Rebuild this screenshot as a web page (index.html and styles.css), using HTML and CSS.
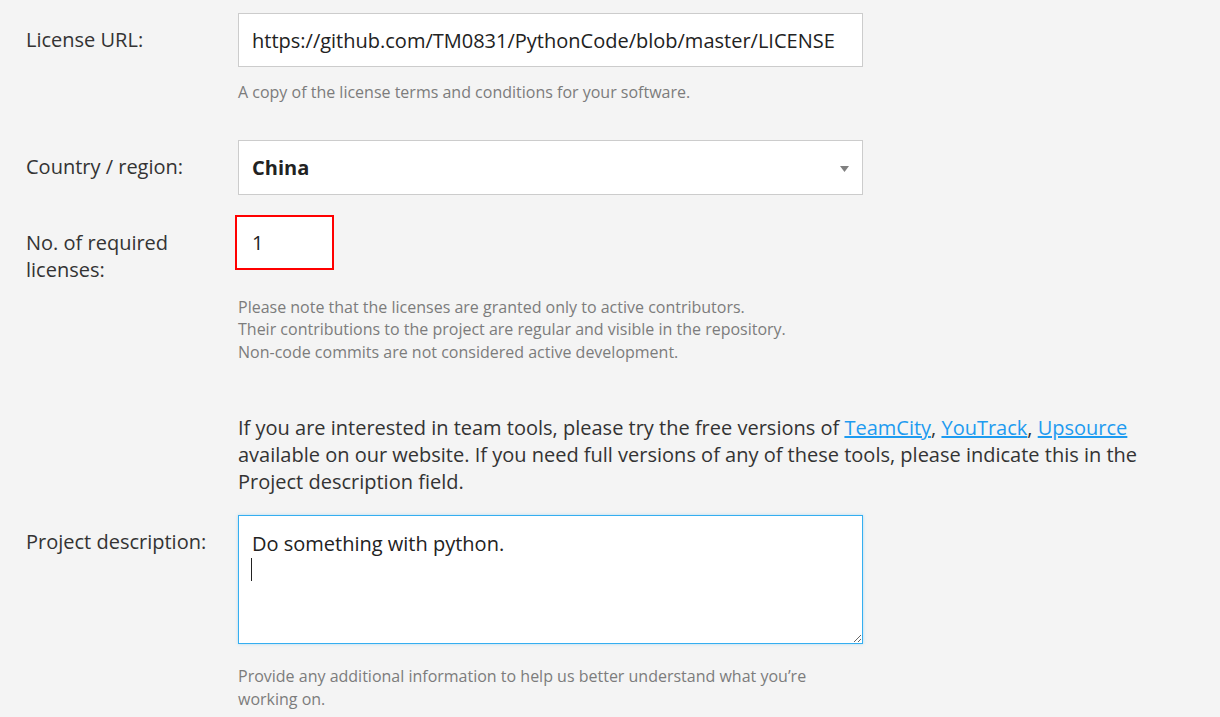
FILE: index.html
```html
<!DOCTYPE html>
<html>
<head>
    <title>License Application</title>
    <link rel="stylesheet" href="styles.css">
</head>
<body>
    <div class="form">
        <div class="row row-url">
            <label class="row-label" for="licenseUrl">License URL:</label>
            <div class="field">
                <input class="input" id="licenseUrl" type="text" value="https://github.com/TM0831/PythonCode/blob/master/LICENSE">
                <div class="hint">A copy of the license terms and conditions for your software.</div>
            </div>
        </div>
        <div class="row row-country">
            <label class="row-label">Country / region:</label>
            <div class="field">
                <div class="select">
                    <span class="select-value">China</span>
                    <svg class="select-arrow" width="9" height="6" viewBox="0 0 9 6"><path d="M0 0h9L4.5 6z" fill="#808080"/></svg>
                </div>
            </div>
        </div>
        <div class="row row-count">
            <label class="row-label row-label-count" for="licenseCount">No. of required licenses:</label>
            <div class="field">
                <input class="input input-number input-error" id="licenseCount" type="text" value="1">
                <div class="hint hint-count">
                    Please note that the licenses are granted only to active contributors.<br>
                    Their contributions to the project are regular and visible in the repository.<br>
                    Non-code commits are not considered active development.
                </div>
            </div>
        </div>
        <p class="note">If you are interested in team tools, please try the free versions of <a href="#">TeamCity</a>, <a href="#">YouTrack</a>, <a href="#">Upsource</a> available on our website. If you need full versions of any of these tools, please indicate this in the Project description field.</p>
        <div class="row">
            <label class="row-label" for="description">Project description:</label>
            <div class="field">
                <div class="textarea-wrap">
                    <textarea class="textarea" id="description">Do something with python.
</textarea>
                    <span class="caret"></span>
                </div>
                <div class="hint hint-desc">Provide any additional information to help us better understand what you’re working on.</div>
            </div>
        </div>
    </div>
</body>
</html>
```

FILE: styles.css
```css
body {
    margin: 0;
    background: #f4f4f4;
    font-family: "Open Sans", Arial, sans-serif;
    color: #333;
}
.form {
    padding: 13px 26px;
}
.row {
    display: flex;
}
.row-url {
    margin-bottom: 36px;
}
.row-country {
    margin-bottom: 20px;
}
.row-label {
    flex: none;
    width: 190px;
    margin-right: 22px;
    padding-top: 13px;
    font-size: 20px;
    line-height: 27px;
    color: #333;
}
.row-label-count {
    padding-top: 14px;
}
.field {
    width: 625px;
}
.input {
    display: block;
    box-sizing: border-box;
    width: 100%;
    height: 54px;
    margin: 0;
    padding: 0 13px;
    border: 1px solid #ccc;
    background: #fff;
    font-family: "Open Sans", Arial, sans-serif;
    font-size: 20px;
    color: #222;
    outline: none;
}
.input-number {
    width: 99px;
    height: 55px;
    margin-left: -3px;
    padding-left: 15px;
}
.input-error {
    border: 2px solid #f00;
}
.select {
    display: flex;
    align-items: center;
    justify-content: space-between;
    box-sizing: border-box;
    height: 55px;
    padding: 0 13px;
    border: 1px solid #ccc;
    background: #fff;
    font-size: 20px;
    font-weight: 700;
    color: #222;
}
.select-arrow {
    margin-top: 4px;
}
.hint {
    margin-top: 14px;
    font-size: 16px;
    line-height: 22.5px;
    color: #7c7c7c;
}
.hint-count {
    margin-top: 26px;
}
.hint-desc {
    margin-top: 21px;
}
.note {
    max-width: 905px;
    margin: 51px 0 20px 212px;
    font-size: 20px;
    line-height: 27px;
    color: #333;
}
.note a {
    color: #1e9bf0;
}
.textarea-wrap {
    position: relative;
}
.textarea {
    display: block;
    box-sizing: border-box;
    width: 100%;
    height: 129px;
    margin: 0;
    padding: 14px 13px;
    border: 1px solid #35aef0;
    background: #fff;
    box-shadow: 0 0 3px rgba(53, 174, 240, 0.35);
    font-family: "Open Sans", Arial, sans-serif;
    font-size: 20px;
    line-height: 27px;
    color: #222;
    outline: none;
    resize: both;
}
.caret {
    position: absolute;
    left: 13px;
    top: 43px;
    width: 1px;
    height: 23px;
    background: #222;
}
```
